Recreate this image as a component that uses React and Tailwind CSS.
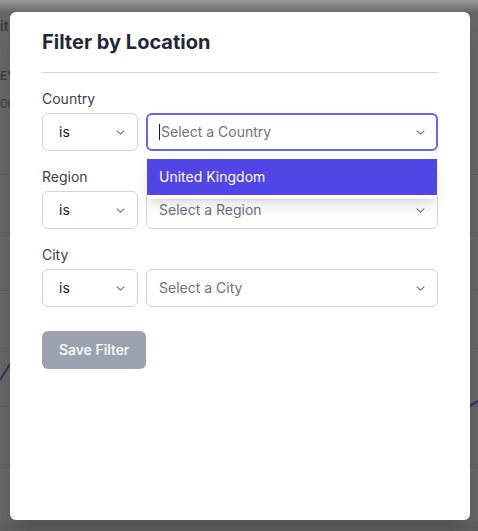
import React from "react";

const Chevron = () => (
  <svg width="9" height="5" viewBox="0 0 9 5" fill="none" className="text-[#6b7280]">
    <path d="M1 0.8l3.5 3.4 3.5-3.4" stroke="currentColor" strokeWidth="1.1" strokeLinecap="round" strokeLinejoin="round" />
  </svg>
);

const IsSelect = () => (
  <div className="flex h-[38px] w-[96px] shrink-0 items-center justify-between rounded-md border border-[#d1d5db] bg-white pl-4 pr-3 text-sm text-[#111827]">
    <span>is</span>
    <Chevron />
  </div>
);

const Field = ({ label, placeholder, focused, children }) => (
  <div className="flex flex-col">
    <label className="mb-1 text-sm leading-5 text-[#374151]">{label}</label>
    <div className="flex gap-2">
      <IsSelect />
      <div className="relative flex-1">
        <div
          className={
            focused
              ? "flex h-[38px] items-center justify-between rounded-md border-2 border-[#6366f1] bg-white pl-[11px] pr-[11px] text-sm text-[#6b7280]"
              : "flex h-[38px] items-center justify-between rounded-md border border-[#d1d5db] bg-white pl-3 pr-3 text-sm text-[#6b7280]"
          }
        >
          <span className="flex items-center">
            {focused && <span className="mr-px inline-block h-4 w-px bg-[#111827]" />}
            {placeholder}
          </span>
          <Chevron />
        </div>
        {children}
      </div>
    </div>
  </div>
);

export default function App() {
  return (
    <div
      className="relative h-[531px] w-[478px] overflow-hidden bg-[#656565] text-[#3a3a3a]"
      style={{ fontFamily: "Inter, 'Noto Sans', sans-serif" }}
    >
      {/* dimmed page behind */}
      <div className="h-3 bg-gradient-to-b from-[#9a9a9a] to-[#6a6a6a]" />
      <div className="pt-1 text-sm font-semibold">it</div>
      <div className="mt-8 text-xs font-semibold tracking-wide">EV</div>
      <div className="mt-3 text-xs">00</div>
      <div className="mt-[62px] flex flex-col">
        {[0, 1, 2, 3, 4, 5].map((i) => (
          <div key={i} className="h-[58px] border-t border-[#5b5b5b]" />
        ))}
      </div>
      <div className="h-[30px] bg-[#5f5f5f]" />
      <svg className="absolute left-0 top-[350px]" width="20" height="40">
        <path d="M0 30 L14 8" stroke="#2b2f66" strokeWidth="2" fill="none" />
      </svg>
      <svg className="absolute right-0 top-[395px]" width="10" height="20">
        <path d="M0 12 L10 6" stroke="#2b2f66" strokeWidth="2" fill="none" />
      </svg>

      {/* modal */}
      <div className="absolute left-[10px] top-[12px] h-[508px] w-[460px] rounded-md bg-white px-8 pt-4 shadow-xl">
        <h2 className="text-xl font-bold leading-7 text-[#1f2937]">Filter by Location</h2>
        <div className="mt-4 border-t border-[#d1d5db]" />
        <div className="mt-4 flex flex-col gap-4">
          <Field label="Country" placeholder="Select a Country" focused>
            <div className="absolute left-0 right-0 top-[42px] z-10 rounded-md border border-[#f3f4f6] bg-white py-[3px] shadow-lg">
              <div className="flex h-9 items-center bg-[#4f46e5] pl-3 text-sm text-white">United Kingdom</div>
            </div>
          </Field>
          <Field label="Region" placeholder="Select a Region" />
          <Field label="City" placeholder="Select a City" />
        </div>
        <button className="mt-6 h-[38px] rounded-md bg-[#9ca3af] px-[17px] text-sm font-medium text-white">
          Save Filter
        </button>
      </div>
    </div>
  );
}
